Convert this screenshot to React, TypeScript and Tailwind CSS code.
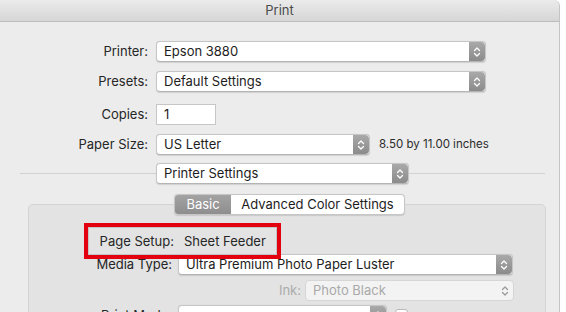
import React from "react";

const Stepper = ({ disabled = false }: { disabled?: boolean }) => (
  <div
    className={
      disabled
        ? "flex h-full w-[16px] items-center justify-center"
        : "flex h-full w-[16px] items-center justify-center rounded-r-[4px] bg-gradient-to-b from-[#a9a9a9] to-[#8b8b8b]"
    }
  >
    <svg width="8" height="12" viewBox="0 0 8 12" fill="none">
      <path
        d="M1.5 4.5 L4 2 L6.5 4.5 M1.5 7.5 L4 10 L6.5 7.5"
        stroke={disabled ? "#9a9a9a" : "#ffffff"}
        strokeWidth="1.3"
        strokeLinecap="round"
        strokeLinejoin="round"
      />
    </svg>
  </div>
);

const Select = ({
  value,
  width,
  disabled = false,
}: {
  value: string;
  width: string;
  disabled?: boolean;
}) => (
  <div
    className={`flex h-[21px] ${width} items-stretch rounded-[4px] border ${
      disabled
        ? "border-[#d6d6d6] bg-[#f3f3f3] text-[#a9a9a9]"
        : "border-[#c6c6c6] border-b-[#b4b4b4] bg-white text-[#1d1d1d] shadow-[0_0.5px_1px_rgba(0,0,0,0.12)]"
    }`}
  >
    <span className="flex-1 truncate pl-[7px] leading-[19px]">{value}</span>
    <Stepper disabled={disabled} />
  </div>
);

const Row = ({
  label,
  children,
  className = "",
}: {
  label: string;
  children: React.ReactNode;
  className?: string;
}) => (
  <div className={`flex items-center ${className}`}>
    <span className="w-[148px] text-right text-[#262626]">{label}</span>
    <div className="ml-[8px]">{children}</div>
  </div>
);

const PanelRow = ({
  label,
  children,
  className = "",
}: {
  label: string;
  children: React.ReactNode;
  className?: string;
}) => (
  <div className={`flex items-center ${className}`}>
    <span className="w-[143px] text-right text-[#262626]">{label}</span>
    <div className="ml-[6px]">{children}</div>
  </div>
);

export default function App() {
  return (
    <div className="h-[312px] w-[566px] overflow-hidden bg-white font-['Inter',sans-serif] text-[13px]">
      <div className="h-full w-[560px] rounded-tr-[6px] border-r border-[#c4c4c4] bg-[#ececec]">
        <div className="flex h-[22px] items-center justify-center rounded-tr-[6px] border-b border-[#bdbdbd] bg-gradient-to-b from-[#ebebeb] to-[#d6d6d6] text-[#4b4b4b]">
          Print
        </div>

        <Row label="Printer:" className="mt-[19px]">
          <Select value="Epson 3880" width="w-[330px]" />
        </Row>
        <Row label="Presets:" className="mt-[9px]">
          <Select value="Default Settings" width="w-[330px]" />
        </Row>
        <Row label="Copies:" className="mt-[12px]">
          <div className="h-[21px] w-[60px] border border-[#c6c6c6] bg-white pl-[7px] leading-[19px] text-[#1d1d1d]">
            1
          </div>
        </Row>
        <Row label="Paper Size:" className="mt-[9px]">
          <div className="flex items-center">
            <Select value="US Letter" width="w-[214px]" />
            <span className="ml-[9px] text-[11.5px] text-[#2b2b2b]">
              8.50 by 11.00 inches
            </span>
          </div>
        </Row>

        <div className="ml-[20px] mt-[8px] flex w-[525px] items-center">
          <div className="h-px flex-1 bg-[#d2d2d2]" />
          <Select value="Printer Settings" width="w-[253px]" />
          <div className="h-px flex-1 bg-[#d2d2d2]" />
        </div>

        <div className="relative ml-[28px] mt-[20px] h-[200px] w-[518px] rounded-[5px] border border-[#d4d4d4] bg-[#e3e3e3]">
          <div className="-mt-[11px] ml-[145px] flex h-[21px] w-[231px] overflow-hidden rounded-[4px] border border-[#c6c6c6] bg-white shadow-[0_0.5px_1px_rgba(0,0,0,0.12)]">
            <span className="flex w-[56px] items-center justify-center bg-gradient-to-b from-[#a3a3a3] to-[#8e8e8e] text-white">
              Basic
            </span>
            <span className="flex flex-1 items-center justify-center text-[#1d1d1d]">
              Advanced Color Settings
            </span>
          </div>

          <div className="mt-[17px] flex h-[20px] items-center">
            <span className="w-[145px] text-right text-[#262626]">Page Setup:</span>
            <span className="ml-[10px] text-[#262626]">Sheet Feeder</span>
          </div>
          <div className="pointer-events-none absolute left-[55px] top-[18px] h-[36px] w-[197px] border-[4px] border-[#e3000f]">
            <div className="h-full w-full border border-[#c4c4c4]" />
          </div>

          <PanelRow label="Media Type:" className="mt-[2px]">
            <Select value="Ultra Premium Photo Paper Luster" width="w-[335px]" />
          </PanelRow>
          <div className="mt-[5px] flex items-center">
            <span className="w-[272px] text-right text-[#ababab]">Ink:</span>
            <div className="ml-[4px]">
              <Select value="Photo Black" width="w-[209px]" disabled />
            </div>
          </div>
          <PanelRow label="Print Mode:" className="mt-[4px]">
            <div className="flex items-center">
              <Select value="" width="w-[209px]" />
              <div className="ml-[8px] h-[13px] w-[13px] rounded-[3px] border border-[#b9b9b9] bg-white" />
            </div>
          </PanelRow>
        </div>
      </div>
    </div>
  );
}
